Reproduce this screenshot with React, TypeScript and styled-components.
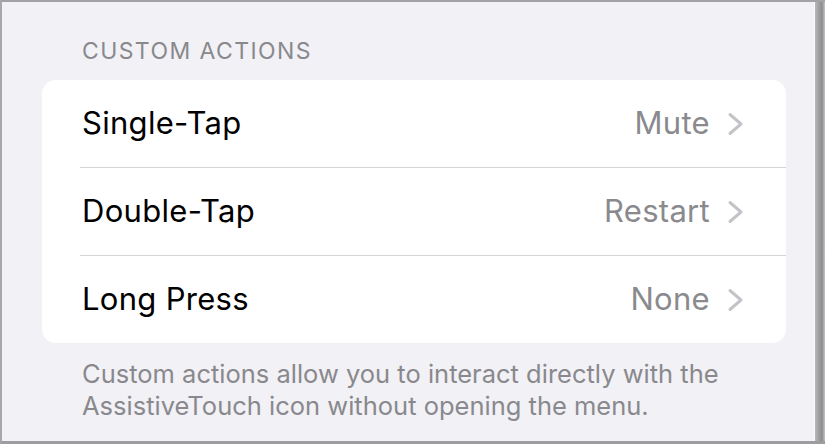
import React from "react"
import styled, { createGlobalStyle } from "styled-components"

const GlobalStyle = createGlobalStyle`
  html, body {
    margin: 0;
    padding: 0;
    background: #f2f1f6;
  }
  * {
    box-sizing: border-box;
  }
`

const Frame = styled.div`
  width: 825px;
  height: 444px;
  display: flex;
  background: #f2f1f6;
  border-top: 2px solid #a3a3a6;
  border-left: 2px solid #a8a8ab;
  border-bottom: 3px solid #9d9da0;
  font-family: Inter, "Liberation Sans", Arial, sans-serif;
  overflow: hidden;
`

const Screen = styled.div`
  flex: 1;
  padding: 0 28px 0 40px;
  border-right: 1px solid #fafafc;
`

const RightEdge = styled.div`
  width: 10px;
  background: linear-gradient(to right, #b8b8bb 0%, #a2a2a5 35%, #8c8c8f 70%, #c6c6c9 100%);
`

const SectionHeader = styled.div`
  margin: 36px 0 0 40px;
  height: 42px;
  font-size: 23px;
  line-height: 26px;
  letter-spacing: 1.4px;
  color: #89898d;
  text-transform: uppercase;
`

const Card = styled.div`
  background: #ffffff;
  border-radius: 14px;
  overflow: hidden;
`

const Row = styled.div<{ $divided?: boolean }>`
  height: ${p => (p.$divided ? 88 : 87)}px;
  margin-left: 38px;
  padding: 0 41px 0 2px;
  display: flex;
  align-items: center;
  border-top: ${p => (p.$divided ? "1px solid #d4d4d8" : "none")};
`

const Label = styled.span`
  font-size: 31px;
  color: #000000;
  letter-spacing: 0.3px;
  margin-top: -2px;
`

const Value = styled.span`
  margin-left: auto;
  font-size: 31px;
  color: #8a8a8e;
  letter-spacing: 0.3px;
  margin-top: -2px;
`

const Chevron = styled.svg`
  margin-left: 17px;
  flex-shrink: 0;
`

const Footer = styled.p`
  margin: 15px 0 0 40px;
  font-size: 25.5px;
  line-height: 32px;
  color: #89898d;
`

const actions = [
  { label: "Single-Tap", value: "Mute" },
  { label: "Double-Tap", value: "Restart" },
  { label: "Long Press", value: "None" },
]

const App = () => {
  return (
    <>
      <GlobalStyle />
      <Frame>
        <Screen>
          <SectionHeader>Custom Actions</SectionHeader>
          <Card>
            {actions.map((a, i) => (
              <Row key={a.label} $divided={i > 0}>
                <Label>{a.label}</Label>
                <Value>{a.value}</Value>
                <Chevron width="18" height="24" viewBox="0 0 18 24">
                  <polyline
                    points="3,2.5 14,12 3,21.5"
                    fill="none"
                    stroke="#c4c4c8"
                    strokeWidth="3"
                    strokeLinecap="round"
                    strokeLinejoin="round"
                  />
                </Chevron>
              </Row>
            ))}
          </Card>
          <Footer>
            Custom actions allow you to interact directly with the
            <br />
            AssistiveTouch icon without opening the menu.
          </Footer>
        </Screen>
        <RightEdge />
      </Frame>
    </>
  )
}

export default App
